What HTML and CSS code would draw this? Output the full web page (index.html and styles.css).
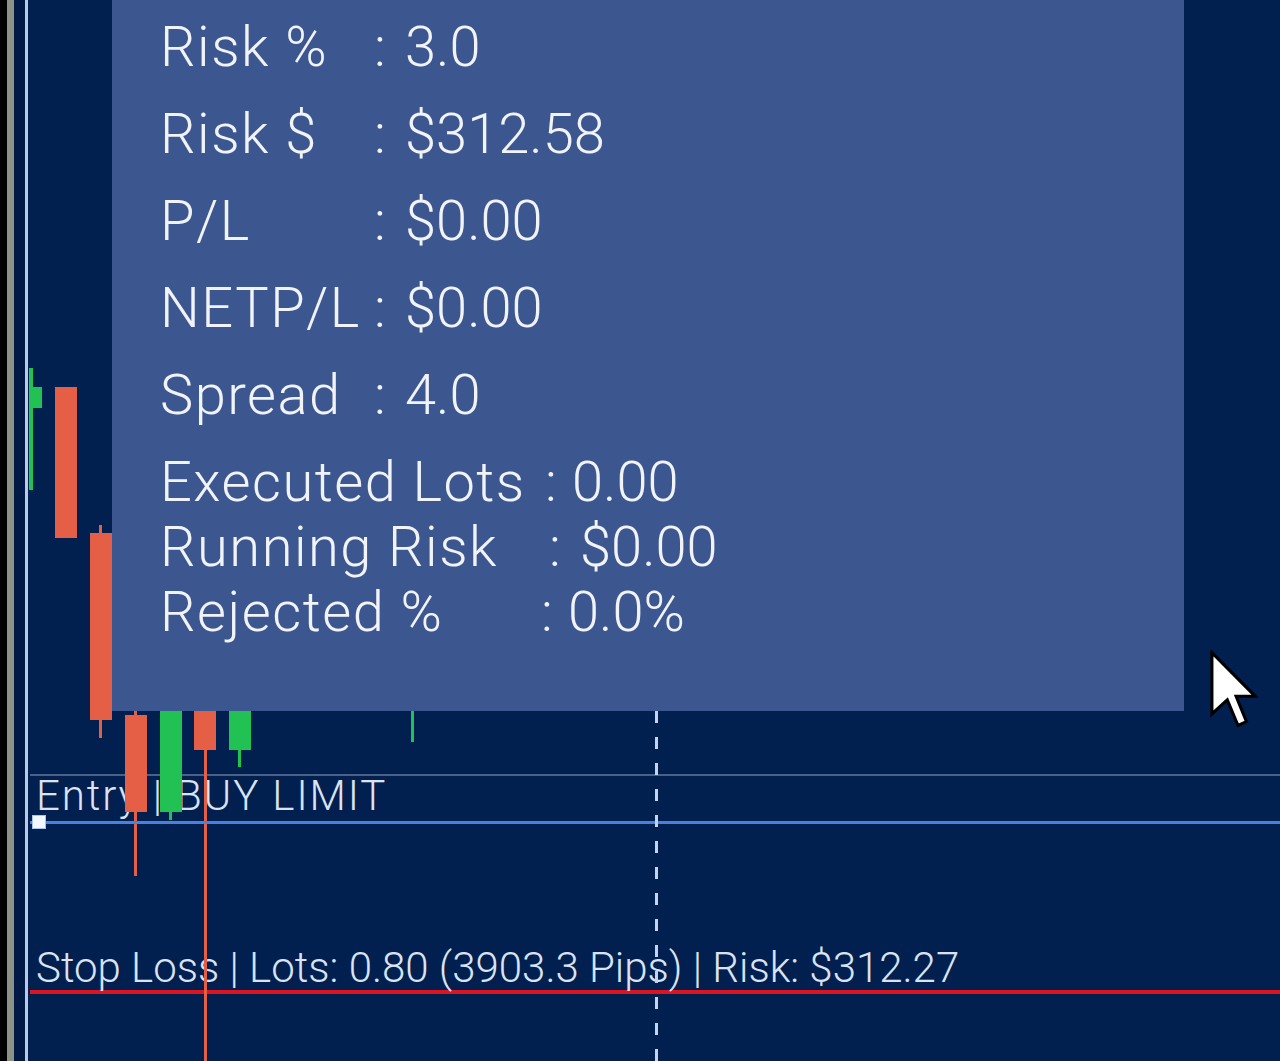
FILE: index.html
```html
<!DOCTYPE html>
<html lang="en">
<head>
<meta charset="utf-8">
<title>Chart</title>
<link rel="stylesheet" href="styles.css">
</head>
<body>
<div class="frame">
  <div class="edge-black"></div>
  <div class="edge-gray"></div>
  <div class="edge-dark"></div>
  <div class="chart">
    <div class="hline grid-line"></div>
    <div class="hline entry-line"></div>
    <div class="entry-handle"></div>
    <div class="hline stop-line"></div>
    <div class="vdash"></div>

    <div class="chart-label entry-label">Entry | BUY LIMIT</div>
    <div class="chart-label stop-label">Stop Loss | Lots: 0.80 (3903.3 Pips) | Risk: $312.27</div>

    <div class="candle green c1"><div class="wick w1"></div><div class="body b1"></div></div>
    <div class="candle red c2"><div class="body b2"></div></div>
    <div class="candle red c3"><div class="wick w3"></div><div class="body b3"></div></div>
    <div class="candle red c4"><div class="wick w4"></div><div class="body b4"></div></div>
    <div class="candle green c5"><div class="wick w5"></div><div class="body b5"></div></div>
    <div class="candle red c6"><div class="wick w6"></div><div class="body b6"></div></div>
    <div class="candle green c7"><div class="wick w7"></div><div class="body b7"></div></div>
    <div class="candle green c8"><div class="wick w8"></div></div>

    <div class="panel">
      <div class="group group-top">
        <div class="row"><span class="k">Risk %</span><span class="sep">:</span><span class="v">3.0</span></div>
        <div class="row"><span class="k">Risk $</span><span class="sep">:</span><span class="v">$312.58</span></div>
        <div class="row"><span class="k">P/L</span><span class="sep">:</span><span class="v">$0.00</span></div>
        <div class="row"><span class="k">NETP/L</span><span class="sep">:</span><span class="v">$0.00</span></div>
        <div class="row"><span class="k">Spread</span><span class="sep">:</span><span class="v">4.0</span></div>
      </div>
      <div class="group group-bottom">
        <div class="row"><span class="k">Executed Lots</span><span class="sep">:</span><span class="v">0.00</span></div>
        <div class="row row-running"><span class="k">Running Risk</span><span class="sep">:</span><span class="v">$0.00</span></div>
        <div class="row row-rejected"><span class="k">Rejected %</span><span class="sep">:</span><span class="v">0.0%</span></div>
      </div>
    </div>
  </div>
</div>
<svg class="cursor" width="48" height="80" viewBox="-0.5 -0.5 12.5 20.5" xmlns="http://www.w3.org/2000/svg">
  <path d="M0 0 L0 16 L4 12.3 L6.8 19 L9 18 L6.3 11.4 L11.3 11.4 Z" fill="#ffffff" stroke="#000000" stroke-width="0.8" stroke-linejoin="miter"/>
</svg>
</body>
</html>
```
FILE: styles.css
```css
* { box-sizing: border-box; }
html, body {
  margin: 0;
  padding: 0;
  width: 1280px;
  height: 1061px;
  overflow: hidden;
  background: #01204f;
  font-family: Roboto, "Liberation Sans", sans-serif;
}
.frame {
  display: flex;
  width: 1280px;
  height: 1061px;
  position: relative;
}
.edge-black { width: 7px; background: #000000; flex: none; }
.edge-gray { width: 7px; background: #8d9287; flex: none; }
.edge-dark { width: 11px; background: #001a45; flex: none; }
.chart {
  flex: 1;
  position: relative;
  background: #01204f;
  border-left: 3px solid #b9c9e6;
  overflow: hidden;
}

/* horizontal lines */
.hline { position: absolute; left: 2px; right: 0; }
.grid-line { top: 774px; height: 2px; background: #4a6084; }
.entry-line { top: 821px; height: 3px; background: #4b80dc; z-index: 2; }
.stop-line { top: 990px; height: 4px; background: #de1420; }
.entry-handle {
  position: absolute;
  left: 4px;
  top: 815px;
  width: 14px;
  height: 14px;
  background: #f2f6ff;
  border: 1px solid #a9c2f2;
  z-index: 3;
}
.vdash {
  position: absolute;
  left: 627px;
  top: 711px;
  bottom: 0;
  width: 3px;
  background: repeating-linear-gradient(to bottom, #c5d3ee 0 12px, transparent 12px 26px);
  z-index: 2;
}

/* labels on chart */
.chart-label {
  position: absolute;
  left: 8px;
  color: #dbe3f3;
  font-size: 42px;
  font-weight: 300;
  line-height: 50px;
  white-space: pre;
}
.entry-label { top: 771px; letter-spacing: 1.9px; }
.stop-label { top: 943px; z-index: 1; letter-spacing: 0px; }

/* candles */
.candle { position: absolute; top: 0; left: 0; z-index: 1; }
.wick, .body { position: absolute; }
.red .wick, .red .body { background: #e55f46; }
.green .wick, .green .body { background: #21c253; }
.wick { width: 3px; }

.w1 { left: 1px; top: 368px; height: 122px; width: 4px; }
.b1 { left: 1px; top: 387px; width: 13px; height: 21px; }
.b2 { left: 27px; top: 387px; width: 22px; height: 151px; }
.w3 { left: 71px; top: 525px; height: 213px; }
.b3 { left: 62px; top: 533px; width: 22px; height: 187px; }
.w4 { left: 106px; top: 710px; height: 166px; }
.b4 { left: 97px; top: 715px; width: 22px; height: 97px; }
.w5 { left: 141px; top: 711px; height: 109px; }
.b5 { left: 132px; top: 711px; width: 22px; height: 101px; }
.w6 { left: 176px; top: 711px; height: 350px; }
.b6 { left: 166px; top: 711px; width: 22px; height: 39px; }
.w7 { left: 210px; top: 711px; height: 56px; }
.b7 { left: 201px; top: 711px; width: 22px; height: 39px; }
.w8 { left: 383px; top: 711px; height: 31px; }

/* info panel */
.panel {
  position: absolute;
  left: 84px;
  top: 0;
  width: 1072px;
  height: 711px;
  background: #3c5790;
  z-index: 5;
  padding: 4px 0 0 48px;
  color: #f1f3f9;
  font-size: 56px;
  font-weight: 300;
  display: flex;
  flex-direction: column;
}
.group { display: flex; flex-direction: column; }
.group-top .row { line-height: 87px; }
.group-bottom { margin-top: 11px; }
.group-bottom .row { line-height: 65px; }
.row { display: grid; white-space: pre; }
.k { letter-spacing: 1.5px; }
.group-top .row { grid-template-columns: 214px 31px auto; }
.group-bottom .row { grid-template-columns: 385px 27px auto; }
.row-running .sep { padding-left: 4px; }
.row-running .v { padding-left: 8px; }
.row-rejected .sep { margin-left: -4px; }
.row-rejected .v { margin-left: -4px; }

.cursor {
  position: absolute;
  left: 1210px;
  top: 650px;
  z-index: 10;
}
```
